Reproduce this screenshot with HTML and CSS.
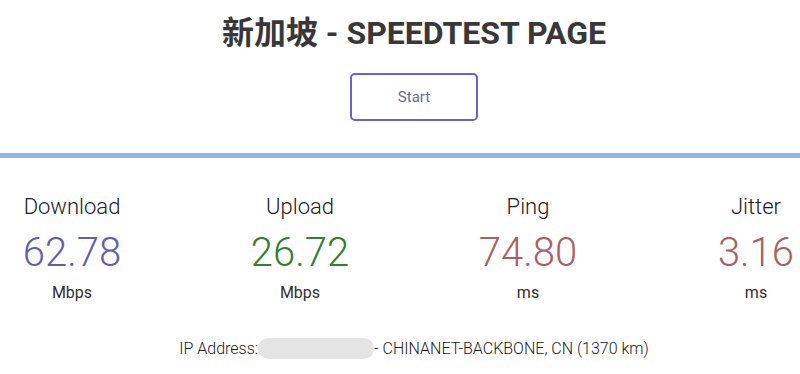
FILE: index.html
```html
<!DOCTYPE html>
<html lang="en">
<head>
    <meta charset="UTF-8">
    <meta name="viewport" content="width=device-width, initial-scale=1.0">
    <title>新加坡 - Speedtest Page</title>
    <link rel="stylesheet" href="styles.css">
</head>
<body>
    <div class="page">
        <h1>新加坡 - SPEEDTEST PAGE</h1>
        <div class="start-wrap">
            <button class="start-btn">Start</button>
        </div>

        <div class="divider"></div>

        <div class="test-row">
            <div class="test-area">
                <div class="test-name">Download</div>
                <div class="meter-text dl">62.78</div>
                <div class="unit">Mbps</div>
            </div>
            <div class="test-area">
                <div class="test-name">Upload</div>
                <div class="meter-text ul">26.72</div>
                <div class="unit">Mbps</div>
            </div>
            <div class="test-area">
                <div class="test-name">Ping</div>
                <div class="meter-text ping">74.80</div>
                <div class="unit">ms</div>
            </div>
            <div class="test-area">
                <div class="test-name">Jitter</div>
                <div class="meter-text ping">3.16</div>
                <div class="unit">ms</div>
            </div>
        </div>

        <div class="ip-area">
            IP Address:<span class="ip-hidden"></span>- CHINANET-BACKBONE, CN (1370 km)
        </div>
    </div>
</body>
</html>
```

FILE: styles.css
```css
body {
    margin: 0;
    padding: 0;
    background-color: #ffffff;
    color: #202020;
    font-family: Roboto, 'Noto Sans CJK SC', sans-serif;
    overflow: hidden;
}

.page {
    width: 828px;
    text-align: center;
}

h1 {
    margin: 0;
    padding-top: 15px;
    font-size: 32px;
    line-height: 36px;
    font-weight: 700;
    color: #383838;
}

.start-wrap {
    padding-top: 22px;
}

.start-btn {
    width: 128px;
    height: 48px;
    border: 2px solid #6a5fd6;
    border-radius: 5px;
    background-color: #ffffff;
    color: #6a6a9a;
    font-family: Roboto, sans-serif;
    font-size: 15px;
    cursor: pointer;
}

.divider {
    margin-top: 32px;
    height: 5px;
    background-color: #91b6ee;
}

.test-row {
    display: flex;
    justify-content: center;
    padding-top: 36px;
}

.test-area {
    flex: 0 0 228px;
}

.test-name {
    font-size: 22px;
    line-height: 26px;
    font-weight: 300;
    color: #202020;
}

.meter-text {
    font-size: 40px;
    line-height: 48px;
    font-weight: 300;
    margin-top: 9px;
}

.dl { color: #6060aa; }
.ul { color: #308030; }
.ping { color: #aa6060; }

.unit {
    font-size: 16px;
    line-height: 20px;
    margin-top: 6px;
    color: #303030;
}

.ip-area {
    padding-top: 35px;
    font-size: 16px;
    font-weight: 300;
    color: #202020;
}

.ip-hidden {
    display: inline-block;
    width: 116px;
    height: 21px;
    vertical-align: -5px;
    background-color: #e4e4e4;
    border-radius: 10px;
}
```
